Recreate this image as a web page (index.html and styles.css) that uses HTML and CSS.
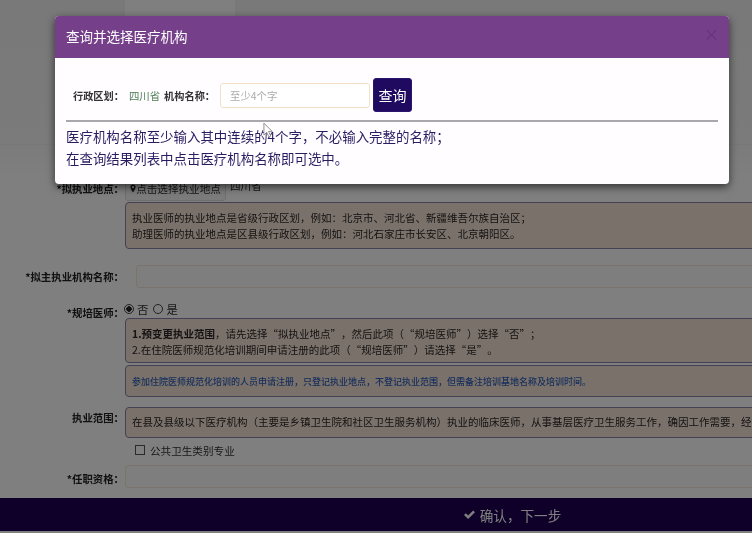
FILE: index.html
```html
<!DOCTYPE html>
<html lang="zh-CN">
<head>
<meta charset="utf-8">
<title>查询并选择医疗机构</title>
<link rel="stylesheet" href="styles.css">
</head>
<body>
<div class="page">
  <main class="main">
    <div class="top-tab"></div>
    <section class="form">
      <div class="row row-location">
        <div class="label">*拟执业地点：</div>
        <div class="field">
          <div class="location-line">
            <button class="loc-btn"><svg class="pin" viewBox="0 0 10 14"><path d="M5 0.5a4.3 4.3 0 0 0-4.3 4.3C0.7 8 5 13.5 5 13.5S9.300 8 9.300 4.800A4.300 4.300 0 0 0 5 0.500zm0 6.200a1.900 1.900 0 1 1 0-3.800 1.900 1.900 0 0 1 0 3.800z"/></svg>点击选择执业地点</button>
            <span class="loc-value">四川省</span>
          </div>
          <div class="note note-location">
            <p>执业医师的执业地点是省级行政区划，例如：北京市、河北省、新疆维吾尔族自治区；</p>
            <p>助理医师的执业地点是区县级行政区划，例如：河北石家庄市长安区、北京朝阳区。</p>
          </div>
        </div>
      </div>
      <div class="row row-org">
        <div class="label">*拟主执业机构名称：</div>
        <div class="field field-org"><div class="input"></div></div>
      </div>
      <div class="row row-train">
        <div class="label label-train">*规培医师：</div>
        <div class="field">
          <div class="radios">
            <span class="radio radio-on"></span><span class="radio-text">否</span>
            <span class="radio"></span><span class="radio-text">是</span>
          </div>
          <div class="note note-train">
            <p><b>1.预变更执业范围</b>，请先选择“拟执业地点”，然后此项（“规培医师”）选择“否”；</p>
            <p>2.在住院医师规范化培训期间申请注册的此项（“规培医师”）请选择“是”。</p>
          </div>
          <div class="note note-blue">
            <p>参加住院医师规范化培训的人员申请注册，只登记执业地点，不登记执业范围，但需备注培训基地名称及培训时间。</p>
          </div>
        </div>
      </div>
      <div class="row row-scope">
        <div class="label label-scope">执业范围：</div>
        <div class="field">
          <div class="note note-scope">
            <p>在县及县级以下医疗机构（主要是乡镇卫生院和社区卫生服务机构）执业的临床医师，从事基层医疗卫生服务工作，确因工作需要，经县级卫生行政部门考核批准</p>
          </div>
          <label class="check"><span class="checkbox"></span>公共卫生类别专业</label>
        </div>
      </div>
      <div class="row row-title">
        <div class="label">*任职资格：</div>
        <div class="field"><div class="input"></div></div>
      </div>
    </section>
  </main>
  <footer class="footer"><svg class="tick" viewBox="0 0 14 12"><path d="M1 6.500 3 4.500 5.500 7 11 1.500l2 2-7.500 7.500z"/></svg>确认，下一步</footer>
</div>

<div class="backdrop"></div>

<div class="modal">
  <header class="modal-head">
    <h1>查询并选择医疗机构</h1>
    <span class="close">×</span>
  </header>
  <div class="modal-body">
    <div class="search">
      <span class="search-label">行政区划：</span>
      <span class="region">四川省</span>
      <span class="search-label search-label-org">机构名称：</span>
      <div class="search-input">至少4个字</div>
      <button class="search-btn">查询</button>
    </div>
    <hr class="rule">
    <p class="hint">医疗机构名称至少输入其中连续的4个字，不必输入完整的名称；</p>
    <p class="hint">在查询结果列表中点击医疗机构名称即可选中。</p>
  </div>
</div>

<svg class="cursor" viewBox="0 0 12 18"><path d="M1 1v13l3-3 2.500 5 2-1-2.500-5h4z"/></svg>
</body>
</html>
```

FILE: styles.css
```css
* { box-sizing: border-box; }
html, body { margin: 0; height: 100%; overflow: hidden; }
body {
  position: relative;
  background: #fff;
  font-family: "Noto Sans CJK SC", "Liberation Sans", sans-serif;
  color: #222;
  text-spacing-trim: space-all;
}
p { margin: 0; }

.page {
  height: 533px;
  display: flex;
  flex-direction: column;
  filter: blur(0.4px);
}
.main { flex: 1; overflow: hidden; background: linear-gradient(#f2f2f2 0, #f6f6f6 140px, #fff 180px); }
.top-tab { width: 110px; height: 16px; margin-left: 125px; background: #ffffff; }
.form { width: 800px; margin-top: 128px; padding-top: 30px; border-top: 1px solid #f0f0f0; }

.row { display: grid; grid-template-columns: 124px 1fr; column-gap: 1px; }
.label { font-size: 10.4px; font-weight: 700; text-align: right; line-height: 14px; color: #222; }
.row-location .label { padding-top: 7px; }
.location-line { display: flex; height: 27px; }
.loc-btn {
  width: 101px; height: 26px; padding: 0; margin: 0;
  display: flex; align-items: center; justify-content: center;
  font: 10.6px "Noto Sans CJK SC", sans-serif; color: #333;
  background: #f7f7f7; border: 1px solid #ddd; border-radius: 3px;
}
.pin { width: 6px; height: 9px; fill: #222; }
.loc-value { margin-left: 4px; padding-top: 3px; font-size: 10.6px; line-height: 15px; color: #333; }

.note {
  background: #f4e3d6;
  border: 1px solid #8a80a8;
  border-radius: 4px;
  padding: 0 6px;
  font-size: 10.5px;
  color: #2a2626;
  white-space: nowrap;
}
.note-location { height: 47px; padding-top: 7px; line-height: 16px; }

.row-org { margin-top: 16px; }
.row-org .label { padding-top: 5px; }
.field-org { padding-left: 11px; }
.input { height: 23px; background: #fcfcfc; border: 1px solid #f6e4d8; border-radius: 3px; }

.row-train { margin-top: 13px; }
.label-train { padding-top: 5px; }
.radios { display: flex; align-items: center; height: 15px; margin-left: -1px; font-size: 11.4px; color: #333; }
.radio { width: 10px; height: 10px; border: 1px solid #444; border-radius: 50%; background: #fff; }
.radio-on { background: radial-gradient(circle, #222 0 2.500px, #fff 3px); }
.radio-text { margin: 0 5px 0 3px; }
.note-train { height: 45px; margin-top: 2px; padding-top: 7px; line-height: 15.500px; }
.note-train b { font-weight: 700; }
.note-blue {
  height: 32px; margin-top: 2px; padding-top: 9px;
  font-size: 9px; line-height: 13px; color: #2f5fb8; font-weight: 500;
}

.row-scope { margin-top: 10px; }
.label-scope { padding-top: 4px; }
.note-scope { height: 31px; padding-top: 6px; line-height: 16px; }
.check {
  display: flex; align-items: center; height: 14px; margin: 5px 0 0 10px;
  font-size: 10.6px; color: #333;
}
.checkbox { width: 10px; height: 10px; margin-right: 5px; border: 1px solid #555; background: #fff; }

.row-title { margin-top: 8px; }
.row-title .label { padding-top: 7px; }

.footer {
  flex: none;
  height: 33px;
  margin-bottom: 2px;
  background: #1c0052;
  display: flex; align-items: center; justify-content: center;
  padding-left: 272px;
  font-size: 13.6px;
  color: #fff;
}
.tick { width: 13px; height: 11px; margin-right: 4px; fill: #fff; }

.backdrop { position: absolute; inset: 0; background: rgba(0, 0, 0, 0.5); }

.modal {
  position: absolute;
  top: 16px; left: 55px;
  width: 674px;
  background: #fffdff;
  border-radius: 4px;
  box-shadow: 0 3px 9px rgba(0, 0, 0, 0.6);
  overflow: hidden;
  filter: blur(0.25px);
}
.modal-head {
  height: 42px;
  background: #753f8a;
  display: flex; align-items: center; justify-content: space-between;
  padding: 0 11px 0 11px;
}
.modal-head h1 { margin: -2px 0 0; font-size: 13.500px; font-weight: 400; color: #fff; line-height: 42px; }
.close { font-size: 15px; line-height: 1; color: #643577; margin: -8px -1px 0 0; }
.modal-body { padding: 20px 11px 15px; }

.search { display: flex; align-items: center; height: 34px; padding-left: 7px; }
.search-label { font-size: 10.200px; font-weight: 700; color: #333; }
.region { margin-left: 5px; font-size: 10.400px; color: #4d7f55; }
.search-label-org { margin-left: 4px; }
.search-input {
  width: 150px; height: 25px; margin-left: 5px;
  border: 1px solid #f3dfca; border-radius: 3px; background: #fff;
  padding-left: 9px;
  font-size: 10.400px; line-height: 23px; color: #aaa;
}
.search-btn {
  width: 39px; height: 34px; margin: 0 0 0 3px; padding: 0;
  background: #1f0a60; border: 1px solid #2a1470; border-radius: 3px;
  font: 14px "Noto Sans CJK SC", sans-serif; color: #fff;
}
.rule { height: 2px; margin: 8px 0 3px; border: 0; background: #aaa6ae; }
.hint { font-size: 13.450px; line-height: 22px; color: #2b1c62; white-space: nowrap; }

.cursor { position: absolute; left: 263px; top: 122px; width: 11px; height: 17px; fill: #fff; stroke: #888; stroke-width: 1; }
```
